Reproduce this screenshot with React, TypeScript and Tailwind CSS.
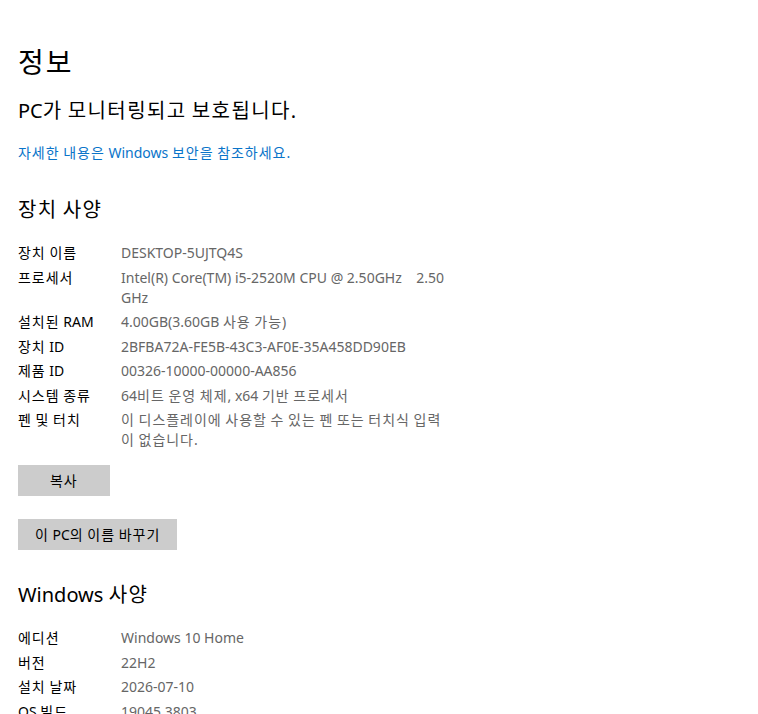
const deviceSpecs: [string, string][] = [
  ["장치 이름", "DESKTOP-5UJTQ4S"],
  ["프로세서", "Intel(R) Core(TM) i5-2520M CPU @ 2.50GHz\u00a0\u00a0\u00a0 2.50 GHz"],
  ["설치된 RAM", "4.00GB(3.60GB 사용 가능)"],
  ["장치 ID", "2BFBA72A-FE5B-43C3-AF0E-35A458DD90EB"],
  ["제품 ID", "00326-10000-00000-AA856"],
  ["시스템 종류", "64비트 운영 체제, x64 기반 프로세서"],
  ["펜 및 터치", "이 디스플레이에 사용할 수 있는 펜 또는 터치식 입력이 없습니다."],
];

const windowsSpecs: [string, string][] = [
  ["에디션", "Windows 10 Home"],
  ["버전", "22H2"],
  ["설치 날짜", "2026-07-10"],
  ["OS 빌드", "19045.3803"],
];

// Hangul runs get a little extra tracking so they set as wide as the system font.
function Ko({ text }: { text: string }) {
  const parts = text.split(/([\uAC00-\uD7A3]+)/);
  return (
    <>
      {parts.map((part, i) =>
        /[\uAC00-\uD7A3]/.test(part) ? (
          <span key={i} className="tracking-[0.07em]">
            {part}
          </span>
        ) : (
          part
        ),
      )}
    </>
  );
}

function SpecTable({ rows }: { rows: [string, string][] }) {
  return (
    <div className="flex flex-col gap-[4.5px]">
      {rows.map(([label, value]) => (
        <div key={label} className="flex text-[14px] leading-[20px]">
          <span className="w-[103px] shrink-0 text-black">
            <Ko text={label} />
          </span>
          <span className="w-[334px] text-[#666666]">
            <Ko text={value} />
          </span>
        </div>
      ))}
    </div>
  );
}

function GrayButton({ children }: { children: React.ReactNode }) {
  return (
    <button className="h-[31px] bg-[#cccccc] px-[17px] text-[14px] text-black">
      {children}
    </button>
  );
}

export default function App() {
  return (
    <div className="h-[714px] overflow-hidden bg-white pl-[18px] pt-[40px] font-['Segoe_UI','Noto_Sans','Noto_Sans_CJK_KR',sans-serif]">
      <h1 className="text-[28px] leading-[44px] text-black">
        <Ko text="정보" />
      </h1>
      <p className="mt-[13px] text-[20px] leading-[28px] text-black">
        <Ko text="PC가 모니터링되고 보호됩니다." />
      </p>
      <a className="mt-[18px] block text-[14px] leading-[20px] text-[#0a74c9]">
        <Ko text="자세한 내용은 Windows 보안을 참조하세요." />
      </a>

      <h2 className="mt-[33px] text-[20px] leading-[28px] text-black">
        <Ko text="장치 사양" />
      </h2>
      <div className="mt-[19px]">
        <SpecTable rows={deviceSpecs} />
      </div>

      <div className="mt-[15px] flex flex-col items-start gap-[23px]">
        <GrayButton>
          <span className="px-[15px]">
            <Ko text="복사" />
          </span>
        </GrayButton>
        <GrayButton>
          <Ko text="이 PC의 이름 바꾸기" />
        </GrayButton>
      </div>

      <h2 className="mt-[31px] text-[20px] leading-[28px] text-black">
        <Ko text="Windows 사양" />
      </h2>
      <div className="mt-[19px]">
        <SpecTable rows={windowsSpecs} />
      </div>
    </div>
  );
}
